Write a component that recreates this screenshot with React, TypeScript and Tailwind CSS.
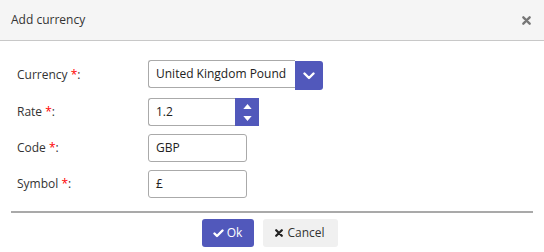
const Req = () => <span className="text-[#ff0000]">*</span>;

const Label = ({ children }: { children: React.ReactNode }) => (
  <div className="w-[137px] pl-[6px] text-[12px] text-[#333]">{children}</div>
);

const inputCls =
  "h-[28px] border border-[#aaa] rounded-[3px] bg-white px-[7px] flex items-center text-[12px] text-[#222] whitespace-nowrap";

const App = () => {
  return (
    <div
      className="w-[544px] h-[252px] bg-white flex flex-col"
      style={{ fontFamily: '"Open Sans", sans-serif' }}
    >
      {/* Header */}
      <div className="h-[41px] bg-[#f5f5f5] border-b border-[#c8c8c8] flex items-center justify-between pl-[11px] pr-[13px]">
        <span className="text-[12px] text-[#333]">Add currency</span>
        <svg width="9" height="9" viewBox="0 0 10 10">
          <path d="M1.5 1.5 L8.5 8.5 M8.5 1.5 L1.5 8.5" stroke="#777" strokeWidth="2.6" strokeLinecap="round" />
        </svg>
      </div>

      {/* Form */}
      <div className="flex flex-col gap-[8px] pt-[19px] px-[11px]">
        <div className="flex items-center">
          <Label>
            Currency <Req />:
          </Label>
          <div className="flex items-start">
            <div className={inputCls + " w-[147px] rounded-r-none border-r-0"}>United Kingdom Pound</div>
            <div className="w-[28px] h-[29px] mt-[1px] bg-[#5158bb] rounded-r-[3px] flex items-center justify-center">
              <svg width="12" height="8" viewBox="0 0 12 8">
                <path d="M1.5 1.5 L6 6 L10.5 1.5" stroke="white" strokeWidth="2.4" fill="none" strokeLinecap="round" strokeLinejoin="round" />
              </svg>
            </div>
          </div>
        </div>

        <div className="flex items-center">
          <Label>
            Rate <Req />:
          </Label>
          <div className="flex items-center">
            <div className={inputCls + " w-[87px] rounded-r-none border-r-0"}>1.2</div>
            <div className="w-[24px] h-[28px] bg-[#5158bb] flex flex-col items-center justify-center gap-[7px]">
              <svg width="9" height="5" viewBox="0 0 10 6">
                <path d="M0 6 L5 0 L10 6 Z" fill="white" />
              </svg>
              <svg width="9" height="5" viewBox="0 0 10 6">
                <path d="M0 0 L5 6 L10 0 Z" fill="white" />
              </svg>
            </div>
          </div>
        </div>

        <div className="flex items-center">
          <Label>
            Code <Req />:
          </Label>
          <div className={inputCls + " w-[99px]"}>GBP</div>
        </div>

        <div className="flex items-center">
          <Label>
            Symbol <Req />:
          </Label>
          <div className={inputCls + " w-[99px]"}>£</div>
        </div>
      </div>

      {/* Footer */}
      <div className="mx-[11px] mt-[13px] border-t-2 border-[#a9a9a9]" />
      <div className="flex justify-center gap-[9px] pt-[6px] pr-[5px]">
        <button className="w-[52px] h-[28px] bg-[#5158bb] rounded-[3px] text-white text-[12px] flex items-center justify-center gap-[3px]">
          <svg width="11" height="9" viewBox="0 0 11 9">
            <path d="M1.5 4.5 L4 7 L9.5 1.5" stroke="white" strokeWidth="2.4" fill="none" strokeLinecap="round" strokeLinejoin="round" />
          </svg>
          Ok
        </button>
        <button className="w-[75px] h-[28px] bg-[#f0f0f0] rounded-[3px] text-[#333] text-[12px] flex items-center justify-center gap-[4px]">
          <svg width="8" height="8" viewBox="0 0 10 10">
            <path d="M1.5 1.5 L8.5 8.5 M8.5 1.5 L1.5 8.5" stroke="#222" strokeWidth="2.8" strokeLinecap="round" />
          </svg>
          Cancel
        </button>
      </div>
    </div>
  );
};

export default App;
